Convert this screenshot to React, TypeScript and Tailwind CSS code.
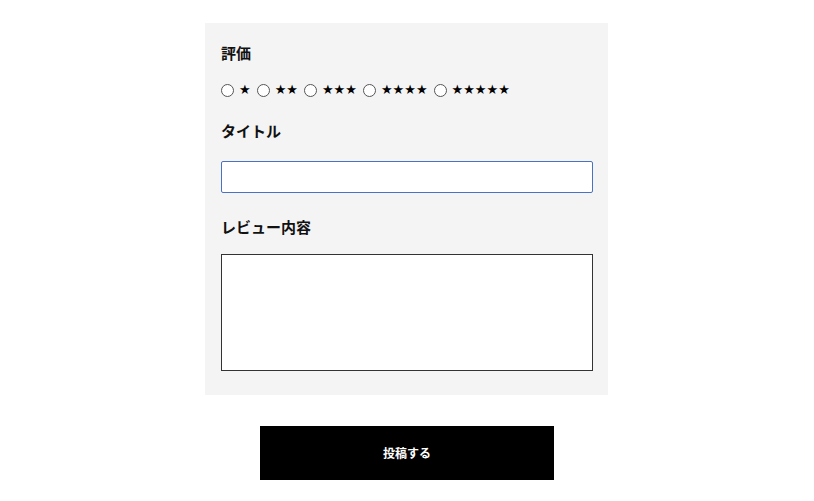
import React from "react";

const ratings = [1, 2, 3, 4, 5];

export default function App() {
  return (
    <div
      className="w-[814px] h-[501px] bg-white flex flex-col items-center pt-[23px]"
      style={{ fontFamily: '"Noto Sans CJK JP", "Noto Sans", sans-serif' }}
    >
      {/* form panel */}
      <div className="w-[403px] -ml-px bg-[#f4f4f4] px-4 pt-[18px] pb-[24px] flex flex-col">
        <label className="text-[15px] font-bold text-[#111] leading-6">評価</label>
        <div className="flex items-center mt-[15px] text-[13px] text-black leading-5">
          {ratings.map((n) => (
            <label key={n} className="flex items-center mr-[6px]">
              <span className="w-[13px] h-[13px] rounded-full border border-[#555] bg-white mr-[5px]"></span>
              <span className="font-['DejaVu_Sans',sans-serif]">{"★".repeat(n)}</span>
            </label>
          ))}
        </div>
        <label className="text-[15px] font-bold text-[#111] leading-6 mt-[19px]">タイトル</label>
        <input
          type="text"
          className="mt-[18px] w-[372px] h-[32px] bg-white border border-[#4a72c4] rounded-[2px] outline-none"
        />
        <label className="text-[15px] font-bold text-[#111] leading-6 mt-[22px]">レビュー内容</label>
        <textarea className="mt-[15px] w-[372px] h-[117px] bg-white border border-[#333] resize-none outline-none" />
      </div>

      <button className="mt-[31px] w-[294px] h-[54px] bg-black text-white text-[12px] font-bold">
        投稿する
      </button>
    </div>
  );
}
